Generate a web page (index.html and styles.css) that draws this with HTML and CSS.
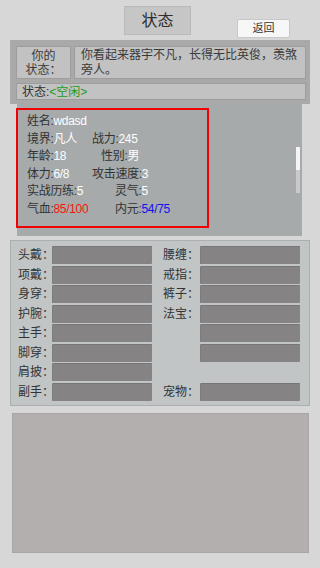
FILE: index.html
```html
<!DOCTYPE html>
<html lang="zh">
<head>
<meta charset="utf-8">
<link rel="stylesheet" href="styles.css">
</head>
<body>
<div class="page">
  <div class="header">
    <div class="title">状态</div>
    <div class="back">返回</div>
  </div>

  <div class="top-panel">
    <div class="top-row">
      <div class="cell who">你的<br>状态：</div>
      <div class="cell desc">你看起来器宇不凡，长得无比英俊，羡煞旁人。</div>
    </div>
    <div class="cell status">状态:<span class="green">&lt;空闲&gt;</span></div>
  </div>

  <div class="stats-panel">
    <div class="stats">
      <div class="line"><span class="k">姓名:<span class="v">wdasd</span></span></div>
      <div class="line"><span class="k first">境界:<span class="v">凡人</span></span><span class="k">战力:<span class="v">245</span></span></div>
      <div class="line"><span class="k first">年龄:<span class="v">18</span></span><span class="k s9">性别:<span class="v">男</span></span></div>
      <div class="line"><span class="k first">体力:<span class="v">6/8</span></span><span class="k">攻击速度:<span class="v">3</span></span></div>
      <div class="line"><span class="k first">实战历练:<span class="v">5</span></span><span class="k s23">灵气:<span class="v">5</span></span></div>
      <div class="line"><span class="k first">气血:<span class="red">85/100</span></span><span class="k s23">内元:<span class="blue">54/75</span></span></div>
    </div>
    <div class="scrollbar"><div class="thumb"></div></div>
  </div>

  <div class="equip-panel">
    <div class="equip-grid">
      <div class="lab">头戴：</div><div class="slot"></div><div class="lab r">腰缠：</div><div class="slot"></div>
      <div class="lab">项戴：</div><div class="slot"></div><div class="lab r">戒指：</div><div class="slot"></div>
      <div class="lab">身穿：</div><div class="slot"></div><div class="lab r">裤子：</div><div class="slot"></div>
      <div class="lab">护腕：</div><div class="slot"></div><div class="lab r">法宝：</div><div class="slot"></div>
      <div class="lab">主手：</div><div class="slot"></div><div class="lab r"></div><div class="slot"></div>
      <div class="lab">脚穿：</div><div class="slot"></div><div class="lab r"></div><div class="slot"></div>
      <div class="lab">肩披：</div><div class="slot"></div><div class="lab r"></div><div class="empty"></div>
      <div class="lab">副手：</div><div class="slot"></div><div class="lab r">宠物：</div><div class="slot"></div>
    </div>
  </div>

  <div class="bottom-panel"></div>
</div>
</body>
</html>
```

FILE: styles.css
```css
html, body {
  margin: 0;
  padding: 0;
  background: #d7d7d7;
}
.page {
  width: 320px;
  height: 568px;
  background: #d7d7d7;
  font-family: "Liberation Sans", "Noto Sans CJK SC", sans-serif;
  color: #333;
  overflow: hidden;
}
.header {
  height: 40px;
  display: flex;
  align-items: flex-start;
}
.title {
  margin-left: 124px;
  margin-top: 6px;
  width: 67px;
  height: 29px;
  box-sizing: border-box;
  background: #c6c6c6;
  border: 1px solid #b9b9b9;
  font-size: 16px;
  line-height: 27px;
  text-align: center;
  color: #2e2e2e;
}
.back {
  margin-left: 46px;
  margin-top: 19px;
  width: 53px;
  height: 19px;
  box-sizing: border-box;
  background: #f7f7f7;
  border: 1px solid #c8c8c8;
  border-radius: 2px;
  font-size: 11px;
  line-height: 17px;
  text-align: center;
  color: #333;
}
.top-panel {
  margin-left: 10px;
  width: 300px;
  height: 64px;
  box-sizing: border-box;
  padding: 6px 4px 4px 6px;
  background: #a9a9a9;
}
.top-row {
  display: flex;
  gap: 3px;
  height: 33px;
}
.cell {
  box-sizing: border-box;
  background: #c2c2c2;
  border: 1px solid #9d9d9d;
  font-size: 12px;
}
.who {
  width: 55px;
  text-align: center;
  line-height: 14px;
  padding-top: 2px;
  color: #3a3a3a;
}
.desc {
  width: 232px;
  line-height: 15px;
  padding: 1px 4px 0 6px;
  color: #3a3a3a;
}
.status {
  margin-top: 4px;
  height: 17px;
  line-height: 16px;
  padding-left: 5px;
}
.green { color: #1c9a1c; }
.stats-panel {
  margin-left: 17px;
  width: 285px;
  height: 132px;
  background: #a6aaaa;
  display: flex;
  align-items: flex-start;
}
.stats {
  margin-left: -1px;
  margin-top: 4px;
  width: 193px;
  height: 120px;
  box-sizing: border-box;
  border: 2px solid #f00000;
  padding: 3px 0 0 9px;
  font-size: 12px;
  line-height: 17.6px;
  letter-spacing: -0.3px;
  color: #333;
  white-space: nowrap;
}
.line { display: flex; }
.first { display: inline-block; width: 65px; }
.s9 { margin-left: 9px; }
.s23 { margin-left: 23px; }
.v { color: #ffffff; }
.red { color: #ff1010; }
.blue { color: #1010ee; }
.scrollbar {
  margin-left: auto;
  margin-right: 2px;
  margin-top: 43px;
  width: 4px;
  height: 46px;
  background: #c9cbcb;
}
.thumb {
  height: 23px;
  background: #f4f4f4;
}
.equip-panel {
  margin-top: 4px;
  margin-left: 10px;
  width: 300px;
  height: 166px;
  box-sizing: border-box;
  border: 1px solid #abafaf;
  background: #c1c5c5;
  padding: 5px 0 0 7px;
}
.equip-grid {
  display: grid;
  grid-template-columns: 34px 100px 48px 100px;
  grid-auto-rows: 18px;
  row-gap: 1.5px;
}
.lab {
  font-size: 12px;
  line-height: 18px;
  white-space: nowrap;
  color: #333;
}
.lab.r {
  padding-left: 11px;
}
.slot {
  box-sizing: border-box;
  background: #858383;
  border-top: 1px solid #777575;
  border-left: 1px solid #7c7a7a;
  border-radius: 1px;
}
.bottom-panel {
  margin-top: 7px;
  margin-left: 12px;
  width: 297px;
  height: 140px;
  box-sizing: border-box;
  border: 1px solid #a9a6a6;
  background: #b3afaf;
}
```
